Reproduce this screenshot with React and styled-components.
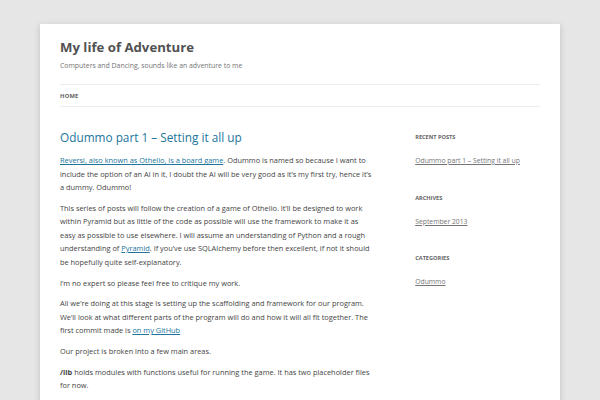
import React from "react";
import styled, { createGlobalStyle } from "styled-components";

const Global = createGlobalStyle`
  html, body { margin: 0; padding: 0; }
  body {
    background: #e6e6e6;
    font-family: "Open Sans", "DejaVu Sans", sans-serif;
    color: #444;
  }
`;

const Page = styled.div`
  margin: 24px 40px 0;
  background: #fff;
  box-shadow: 0 2px 6px rgba(100, 100, 100, 0.3);
  padding: 0 20px 40px;
  min-height: 500px;
`;

const Header = styled.header`
  padding-top: 14px;
`;

const SiteTitle = styled.h1`
  margin: 0;
  font-size: 13.2px;
  font-weight: 700;
  line-height: 18px;
  color: #515151;
`;

const Tagline = styled.h2`
  margin: 4px 0 0;
  font-size: 6.9px;
  font-weight: 400;
  line-height: 12px;
  color: #757575;
`;

const Nav = styled.nav`
  margin-top: 12px;
  border-top: 1px solid #ededed;
  border-bottom: 1px solid #ededed;
  height: 21px;
  display: flex;
  align-items: center;
`;

const NavItem = styled.a`
  font-size: 5.8px;
  font-weight: 700;
  text-transform: uppercase;
  color: #5e5e5e;
  letter-spacing: 0.2px;
  text-decoration: none;
`;

const Main = styled.div`
  display: grid;
  grid-template-columns: 65.1% 26%;
  justify-content: space-between;
  padding-top: 21px;
`;

const Article = styled.article``;

const PostTitle = styled.h1`
  margin: 0 0 8.3px;
  font-size: 11.8px;
  font-weight: 400;
  line-height: 18px;
  color: #21759b;
`;

const P = styled.p`
  margin: 0 0 7.5px;
  font-size: 7.4px;
  line-height: 13.4px;
  color: #444;
`;

const Link = styled.a`
  color: #21759b;
  text-decoration: underline;
`;

const Sidebar = styled.aside`
  padding-top: 4px;
`;

const Widget = styled.section`
  margin-bottom: 25.5px;
`;

const WidgetTitle = styled.h3`
  margin: 0 0 13px;
  font-size: 5.6px;
  font-weight: 700;
  text-transform: uppercase;
  line-height: 10px;
  color: #636363;
`;

const WidgetLink = styled.a`
  display: block;
  font-size: 6.8px;
  line-height: 12px;
  color: #757575;
  text-decoration: underline;
`;

export default function App() {
  return (
    <>
      <Global />
      <Page>
        <Header>
          <SiteTitle>My life of Adventure</SiteTitle>
          <Tagline>Computers and Dancing, sounds like an adventure to me</Tagline>
          <Nav>
            <NavItem href="#">Home</NavItem>
          </Nav>
        </Header>
        <Main>
          <Article>
            <PostTitle>Odummo part 1 – Setting it all up</PostTitle>
            <P>
              <Link href="#">Reversi, also known as Othello, is a board game</Link>. Odummo is named so because I want to include the option of an AI in it, I doubt the AI will be very good as it’s my first try, hence it’s a dummy. Odummo!
            </P>
            <P>
              This series of posts will follow the creation of a game of Othello. It’ll be designed to work within Pyramid but as little of the code as possible will use the framework to make it as easy as possible to use elsewhere. I will assume an understanding of Python and a rough understanding of <Link href="#">Pyramid</Link>. If you’ve use SQLAlchemy before then excellent, if not it should be hopefully quite self-explanatory.
            </P>
            <P>I’m no expert so please feel free to critique my work.</P>
            <P>
              All we’re doing at this stage is setting up the scaffolding and framework for our program. We’ll look at what different parts of the program will do and how it will all fit together. The first commit made is <Link href="#">on my GitHub</Link>
            </P>
            <P>Our project is broken into a few main areas.</P>
            <P>
              <strong>/lib</strong> holds modules with functions useful for running the game. It has two placeholder files for now.
            </P>
            <P>
              <strong>/templates</strong> holds all the view templates files, there is one different set per sell and add.
            </P>
          </Article>
          <Sidebar>
            <Widget>
              <WidgetTitle>Recent Posts</WidgetTitle>
              <WidgetLink href="#">Odummo part 1 – Setting it all up</WidgetLink>
            </Widget>
            <Widget>
              <WidgetTitle>Archives</WidgetTitle>
              <WidgetLink href="#">September 2013</WidgetLink>
            </Widget>
            <Widget>
              <WidgetTitle>Categories</WidgetTitle>
              <WidgetLink href="#">Odummo</WidgetLink>
            </Widget>
          </Sidebar>
        </Main>
      </Page>
    </>
  );
}
